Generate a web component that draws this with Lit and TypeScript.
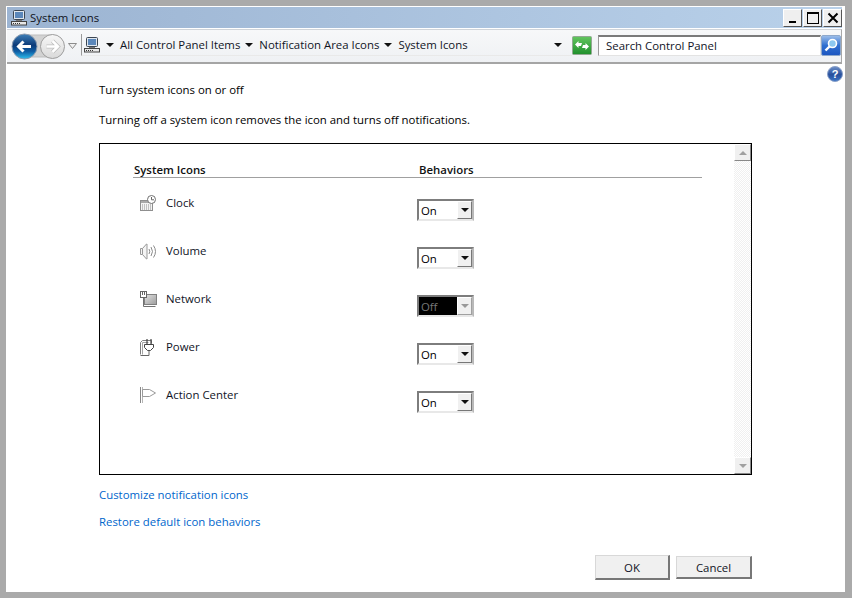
import { LitElement, html, css, svg } from "lit";
import { customElement } from "lit/decorators.js";

const computer = html`<svg width="18" height="16" viewBox="0 0 18 16"><rect x="3.5" y="0.5" width="11" height="9" rx="1" fill="#dfe6ee" stroke="#3c4652"/><rect x="5" y="2" width="8" height="6" fill="#5b87ba"/><rect x="6" y="10" width="6" height="1" fill="#777"/><rect x="1.5" y="11.5" width="15" height="3.5" fill="#e8e8e8" stroke="#444"/><path d="M3 13.5h8" stroke="#333" stroke-dasharray="1 1"/></svg>`;

const icons: Record<string, unknown> = {
  clock: svg`<rect x="0.5" y="5.5" width="12" height="10" fill="#f4f4f4" stroke="#8f8f8f"/><rect x="1" y="6" width="11" height="2" fill="#a9a9a9"/><path d="M2 10h9M2 12h9M2 14h9" stroke="#8f8f8f" stroke-dasharray="1 1"/><circle cx="11.5" cy="4.5" r="4" fill="#fff" stroke="#707070"/><path d="M11.5 2V4.8H14" fill="none" stroke="#666"/>`,
  volume: svg`<path d="M0.5 5.5h2v6h-2z" fill="#f4f4f4" stroke="#999"/><path d="M2.5 5.5l4-4.5h.5v15h-.5l-4-4.5z" fill="#f4f4f4" stroke="#999"/><path d="M9 6q1.5 2.5 0 5M11 4q3 4.5 0 9M13.5 2.5q4 6 0 12" fill="none" stroke="#8a8a8a"/>`,
  network: svg`<defs><linearGradient id="n" x1="0" y1="0" x2="1" y2="1"><stop offset="0" stop-color="#e2e2e2"/><stop offset="1" stop-color="#9c9c9c"/></linearGradient></defs><rect x="4.5" y="3.5" width="12" height="10" fill="url(#n)" stroke="#808080"/><rect x="0.5" y="0.5" width="6" height="6" fill="#fff" stroke="#666"/><path d="M2.5 1v3M4.5 1v3" stroke="#666"/><path d="M3.5 7v8.5h12" fill="none" stroke="#707070"/>`,
  power: svg`<path d="M0.5 15.5V3.5l2-2h9v3" fill="#fff" stroke="#808080"/><path d="M2.5 15.5V3.5h6" fill="none" stroke="#a5a5a5"/><path d="M7 0v5M11 0v5" stroke="#444" stroke-width="1.2"/><path d="M4.5 5.5h9v3l-3 3h-3l-3-3z" fill="#fff" stroke="#444"/><path d="M9 11.5v5h-8.500" fill="none" stroke="#666"/>`,
  flag: svg`<path d="M0.500 0v16" stroke="#888"/><path d="M2.500 0v16" stroke="#b5b5b5"/><path d="M2.500 2.500h7l6 3.500-6 3.500h-7z" fill="#fff" stroke="#9a9a9a"/>`,
};

const rows = [
  { icon: "clock", label: "Clock", value: "On" },
  { icon: "volume", label: "Volume", value: "On" },
  { icon: "network", label: "Network", value: "Off", off: true },
  { icon: "power", label: "Power", value: "On" },
  { icon: "flag", label: "Action Center", value: "On" },
];

@customElement("app-root")
export class AppRoot extends LitElement {
  static styles = css`
    :host {
      display: block;
      box-sizing: border-box;
      width: 852px;
      height: 598px;
      background: #aaaaaa;
      padding: 6px 7px 6px 6px;
      font-family: "Open Sans", "Noto Sans", sans-serif;
      font-size: 11.4px;
      color: #000;
      overflow: hidden;
    }
    svg { display: block; flex: none; }
    .win {
      height: 100%;
      background: #fff;
      display: flex;
      flex-direction: column;
      padding: 1px 3px 0 1px;
      box-sizing: border-box;
    }
    .title {
      height: 21px;
      flex: none;
      background: linear-gradient(90deg, #9cb4d2, #b9d1ea);
      display: flex;
      align-items: center;
      gap: 2px;
      padding-left: 3px;
      color: #10131c;
    }
    .ctrls { margin-left: auto; display: flex; gap: 1px; }
    .ctrl {
      width: 19px; height: 18px; box-sizing: border-box;
      background: #efefef;
      border: 1px solid; border-color: #fff #555 #555 #fff;
      display: flex; align-items: center; justify-content: center;
    }
    .nav {
      margin-top: 1px;
      height: 35px;
      flex: none;
      box-sizing: border-box;
      background: linear-gradient(#f7f8f9, #eff1f4);
      border-top: 1px solid #d0d4d9;
      border-right: 1px solid #a8a8a8;
      border-bottom: 2px solid #a5a5a5;
      display: flex;
      align-items: center;
      padding: 0 0 2px 3px;
    }
    .arrows { display: flex; align-items: center; width: 71px; flex: none; margin-top: 2px; }
    .addr {
      height: 22px;
      width: 491px;
      flex: none;
      box-sizing: border-box;
      border-left: 1px solid #9a9a9a;
      border-bottom: 1px solid #e9e9e9;
      display: flex;
      align-items: center;
      padding-left: 1px;
      color: #10141f;
    }
    .tri { width: 0; height: 0; border-left: 4px solid transparent; border-right: 4px solid transparent; border-top: 4px solid #111; flex: none; }
    .crumbs { display: flex; align-items: center; gap: 5px; margin-left: 5px; }
    .crumbs .tri { margin-right: 1px; }
    .addr > .tri { margin-left: auto; margin-right: 10px; }
    .go { width: 20px; height: 19px; flex: none; margin-right: 6px; }
    .search {
      width: 223px; height: 21px; box-sizing: border-box; flex: none;
      border: 1px solid; border-width: 2px 1px 1px 1px;
      border-color: #7a7a7a #e3e3e3 #e3e3e3 #9a9a9a;
      background: #fff;
      padding-left: 7px;
      display: flex; align-items: center;
      color: #10141f;
    }
    .sbtn { margin-left: 0; flex: none; }
    .main { flex: 1; display: flex; flex-direction: column; padding: 0 90px 0 92px; min-height: 0; }
    .help { align-self: flex-end; margin: 2px -91px 0 0; }
    .h1 { line-height: 16px; }
    .h2 { margin-top: 14px; line-height: 16px; }
    .panel {
      margin-top: 15px;
      height: 332px;
      flex: none;
      box-sizing: border-box;
      border: 1px solid #000;
      display: flex;
    }
    .content { flex: 1; padding: 18px 0 0 33px; }
    .head {
      width: 569px;
      box-sizing: border-box;
      border-bottom: 1px solid #a0a0a0;
      display: grid;
      grid-template-columns: 285px 1fr;
      font-weight: 600;
      height: 16px;
      line-height: 16px;
      padding-left: 1px;
      color: #111;
    }
    .row {
      display: grid;
      grid-template-columns: 284px 1fr;
      height: 48px;
      align-items: start;
      width: 400px;
    }
    .rows { padding-top: 13px; }
    .name { display: flex; gap: 9px; align-items: center; padding-left: 7px; height: 23px; color: #10141f; }
    .name span { margin-left: -1px; }
    .name svg { margin-top: 3px; }
    .sel {
      width: 57px; height: 22px; box-sizing: border-box;
      margin-top: 8px;
      border: 2px solid; border-color: #7d7d7d #b9b9b9 #e8e8e8 #7d7d7d;
      background: #fff;
      display: flex; align-items: center; justify-content: space-between;
      padding-left: 2px;
    }
    .sel.off { background: #000; color: #777; }
    .sel .btn {
      width: 15px; height: 18px; box-sizing: border-box;
      background: #f0f0f0;
      border: 1px solid; border-color: #fff #777 #777 #fff;
      display: flex; align-items: center; justify-content: center;
    }
    .sel.off .tri { border-top-color: #999; }
    .sel.off .btn { border-color: #fff #a0a0a0 #a0a0a0 #fff; }
    .scroll {
      width: 17px; flex: none;
      display: flex; flex-direction: column; justify-content: space-between;
      background: repeating-conic-gradient(#f0f0f0 0 25%, #fff 0 50%) 0 0 / 2px 2px;
    }
    .sb {
      height: 17px; box-sizing: border-box;
      background: #f0f0f0;
      border: 1px solid; border-color: #fff #888 #888 #fff;
      display: flex; align-items: center; justify-content: center;
    }
    .up { width: 0; height: 0; border-left: 4px solid transparent; border-right: 4px solid transparent; border-bottom: 4px solid #a0a0a0; }
    .dn { width: 0; height: 0; border-left: 4px solid transparent; border-right: 4px solid transparent; border-top: 4px solid #a0a0a0; }
    a { color: #0066cc; text-decoration: none; line-height: 16px; display: block; }
    .l1 { margin-top: 12px; }
    .l2 { margin-top: 11px; }
    .btns { display: flex; justify-content: flex-end; align-items: center; gap: 6px; margin-top: 25px; }
    button {
      font: inherit; color: #10141f; padding: 0;
      background: #f0f0f0;
      box-sizing: border-box;
      border: 1px solid; border-color: #d8d8d8 #777 #777 #d8d8d8;
      border-width: 1px 2px 2px 1px;
    }
    .ok { width: 75px; height: 25px; }
    .cancel { width: 76px; height: 23px; }
  `;

  render() {
    return html`<div class="win">
      <div class="title">
        ${computer}<span>System Icons</span>
        <div class="ctrls">
          <div class="ctrl"><svg width="10" height="10"><rect x="1" y="8" width="7" height="2" fill="#000"/></svg></div>
          <div class="ctrl"><svg width="14" height="14"><rect x="1.500" y="1.500" width="11" height="11" fill="none" stroke="#000"/><rect x="1" y="1" width="12" height="2" fill="#000"/></svg></div>
          <div class="ctrl"><svg width="12" height="12"><path d="M1.500 1.500l9 9M10.500 1.500l-9 9" stroke="#000" stroke-width="2"/></svg></div>
        </div>
      </div>
      <div class="nav">
        <div class="arrows">
          <svg width="57" height="28" viewBox="0 0 57 28">
            <defs>
              <linearGradient id="b" x1="0" y1="0" x2="0" y2="1"><stop offset="0" stop-color="#3d7fb8"/><stop offset=".45" stop-color="#0c3a78"/><stop offset=".7" stop-color="#0f5ea5"/><stop offset="1" stop-color="#2fc0ee"/></linearGradient>
              <linearGradient id="g" x1="0" y1="0" x2="0" y2="1"><stop offset="0" stop-color="#f7f7f7"/><stop offset="1" stop-color="#d9d9d9"/></linearGradient>
            </defs>
            <rect x="14" y="3" width="28" height="22" fill="#d2d2d2" stroke="#bdbdbd"/>
            <circle cx="42.500" cy="14.500" r="12" fill="url(#g)" stroke="#9d9d9d"/>
            <path d="M36.500 14.500h11M42.500 9l5.500 5.500-5.500 5.500" fill="none" stroke="#bdbdbd" stroke-width="4"/>
            <path d="M36.500 14.500h11M42.500 9l5.500 5.500-5.500 5.500" fill="none" stroke="#fff" stroke-width="2.500"/>
            <circle cx="14.500" cy="14.500" r="12.500" fill="url(#b)" stroke="#8b9bb0"/>
            <path d="M21 14.500H9M13.500 9.500l-5 5 5 5" fill="none" stroke="#fff" stroke-width="3"/>
          </svg>
          <svg width="12" height="8"><path d="M1.500 1.500h8l-4 5z" fill="#f0f0f0" stroke="#8c8c8c"/></svg>
        </div>
        <div class="addr">
          ${computer}
          <div class="crumbs">
            <div class="tri"></div>
            <span>All Control Panel Items</span>
            <div class="tri"></div>
            <span>Notification Area Icons</span>
            <div class="tri"></div>
            <span>System Icons</span>
          </div>
          <div class="tri"></div>
        </div>
        <div class="go"><svg width="20" height="19"><defs><linearGradient id="gg" x1="0" y1="0" x2="0" y2="1"><stop offset="0" stop-color="#63c65f"/><stop offset="1" stop-color="#1f8f2c"/></linearGradient></defs><rect x=".5" y=".5" width="19" height="18" rx="1" fill="url(#gg)" stroke="#93a893"/><path d="M3 8.500l3.500-3.500v2h3.500l-1 3H6.500v2z" fill="#fff"/><path d="M17 10.500l-3.500 3.500v-2H10l1-3h2.500V7z" fill="#fff"/></svg></div>
        <div class="search">Search Control Panel</div>
        <div class="sbtn"><svg width="20" height="21"><defs><linearGradient id="sb" x1="0" y1="0" x2="0" y2="1"><stop offset="0" stop-color="#9fc0ea"/><stop offset=".5" stop-color="#2f6fd0"/><stop offset="1" stop-color="#1c55c0"/></linearGradient></defs><rect x=".5" y=".5" width="19" height="20" rx="1.500" fill="url(#sb)" stroke="#8ea8cb"/><circle cx="11.500" cy="8.500" r="4" fill="#8cc8f0" stroke="#fff" stroke-width="1.600"/><path d="M8.500 11.500L4.500 15.500" stroke="#fff" stroke-width="2.400"/></svg></div>
      </div>
      <div class="main">
        <div class="help"><svg width="16" height="16"><defs><linearGradient id="hp" x1="0" y1="0" x2="0" y2="1"><stop offset="0" stop-color="#6d8fc8"/><stop offset=".55" stop-color="#274f9c"/><stop offset="1" stop-color="#3f78c8"/></linearGradient></defs><circle cx="8" cy="8" r="7.500" fill="url(#hp)" stroke="#8aa0c8"/><text x="8" y="12" text-anchor="middle" font-size="11" font-weight="700" font-family="Liberation Sans" fill="#fff">?</text></svg></div>
        <div class="h1">Turn system icons on or off</div>
        <div class="h2">Turning off a system icon removes the icon and turns off notifications.</div>
        <div class="panel">
          <div class="content">
            <div class="head"><span>System Icons</span><span>Behaviors</span></div>
            <div class="rows">
              ${rows.map(
                (r) => html`<div class="row">
                  <div class="name"><svg width="18" height="18" viewBox="0 0 18 18">${icons[r.icon]}</svg><span>${r.label}</span></div>
                  <div class="sel ${r.off ? "off" : ""}"><span>${r.value}</span><div class="btn"><div class="tri"></div></div></div>
                </div>`
              )}
            </div>
          </div>
          <div class="scroll"><div class="sb"><div class="up"></div></div><div class="sb"><div class="dn"></div></div></div>
        </div>
        <a class="l1">Customize notification icons</a>
        <a class="l2">Restore default icon behaviors</a>
        <div class="btns"><button class="ok">OK</button><button class="cancel">Cancel</button></div>
      </div>
    </div>`;
  }
}
